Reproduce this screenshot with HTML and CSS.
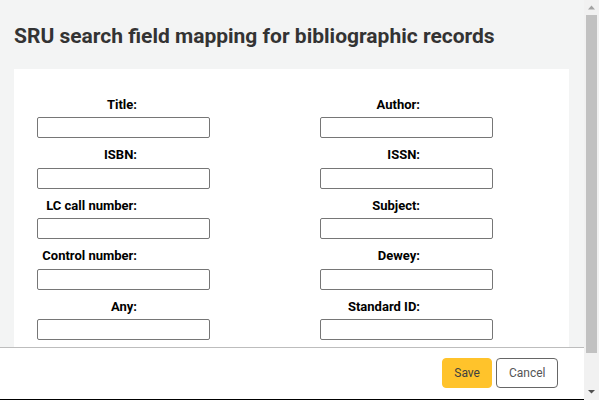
FILE: index.html
```html
<!DOCTYPE html>
<html lang="en">
<head>
<meta charset="utf-8">
<title>SRU search field mapping</title>
<link rel="stylesheet" href="styles.css">
</head>
<body>
<div class="page">
  <h1 class="title">SRU search field mapping for bibliographic records</h1>
  <div class="panel">
    <div class="grid">
      <div class="field"><label class="lbl">Title:</label><input class="inp" type="text"></div>
      <div class="field"><label class="lbl">Author:</label><input class="inp" type="text"></div>
      <div class="field"><label class="lbl">ISBN:</label><input class="inp" type="text"></div>
      <div class="field"><label class="lbl">ISSN:</label><input class="inp" type="text"></div>
      <div class="field"><label class="lbl">LC call number:</label><input class="inp" type="text"></div>
      <div class="field"><label class="lbl">Subject:</label><input class="inp" type="text"></div>
      <div class="field"><label class="lbl">Control number:</label><input class="inp" type="text"></div>
      <div class="field"><label class="lbl">Dewey:</label><input class="inp" type="text"></div>
      <div class="field"><label class="lbl">Any:</label><input class="inp" type="text"></div>
      <div class="field"><label class="lbl">Standard ID:</label><input class="inp" type="text"></div>
    </div>
  </div>
</div>
<div class="footer">
  <button class="btn btn-save" type="button">Save</button>
  <button class="btn btn-cancel" type="button">Cancel</button>
</div>
<div class="scrollbar" aria-hidden="true">
  <div class="sb-btn"><svg width="15" height="15" viewBox="0 0 15 15"><path d="M4 9.5 L7.5 5.5 L11 9.5 Z" fill="#a3a3a3"/></svg></div>
  <div class="sb-track"><div class="sb-thumb"></div></div>
  <div class="sb-btn"><svg width="15" height="15" viewBox="0 0 15 15"><path d="M4 5 L7.5 8.5 L11 5 Z" fill="#505050"/></svg></div>
</div>
</body>
</html>
```

FILE: styles.css
```css
html, body {
  margin: 0;
  padding: 0;
}
html {
  overflow: hidden;
}
body {
  background: #f3f4f4;
  font-family: Roboto, "Liberation Sans", Arial, sans-serif;
  color: #000;
}
.page {
  padding: 22px 30px 52px 14px;
}
.title {
  margin: 0 0 19px 0;
  font-size: 21px;
  line-height: 28px;
  font-weight: 700;
  color: #333;
  white-space: nowrap;
}
.panel {
  background: #fff;
  padding: 26.7px 0 48px 23px;
}
.grid {
  display: grid;
  grid-template-columns: 283px 1fr;
  row-gap: 8px;
}
.field {
  display: flex;
  flex-direction: column;
  align-items: flex-start;
}
.lbl {
  display: block;
  width: 100px;
  text-align: right;
  font-size: 13px;
  line-height: 17px;
  font-weight: 700;
  margin-bottom: 4.5px;
  white-space: nowrap;
}
.inp {
  box-sizing: border-box;
  width: 173px;
  height: 21px;
  margin: 0;
  border: 1px solid #767676;
  border-radius: 2px;
  padding: 1px 2px;
  background: #fff;
}
.footer {
  position: fixed;
  left: 0;
  right: 15px;
  bottom: 0;
  background: #fff;
  border-top: 1px solid #bdbdbd;
  border-bottom: 1px solid #000;
  padding: 10px 26px 11px 0;
  display: flex;
  justify-content: flex-end;
  gap: 4px;
}
.btn {
  box-sizing: border-box;
  height: 30px;
  padding: 0 11.5px;
  border-radius: 4px;
  font-family: Roboto, "Liberation Sans", Arial, sans-serif;
  font-size: 12px;
  cursor: pointer;
}
.btn-save {
  background: #ffc32b;
  border: 1px solid #ffc32b;
  color: #404040;
}
.btn-cancel {
  background: #fff;
  border: 1px solid #666;
  color: #555;
}
.scrollbar {
  position: fixed;
  top: 0;
  right: 0;
  bottom: 0;
  width: 15px;
  background: #f1f1f1;
  display: flex;
  flex-direction: column;
}
.sb-btn {
  height: 15px;
  flex: none;
  display: flex;
}
.sb-track {
  flex: 1;
  padding: 0 2px;
  display: flex;
  flex-direction: column;
}
.sb-thumb {
  height: 338px;
  background: #c1c1c1;
}
```
